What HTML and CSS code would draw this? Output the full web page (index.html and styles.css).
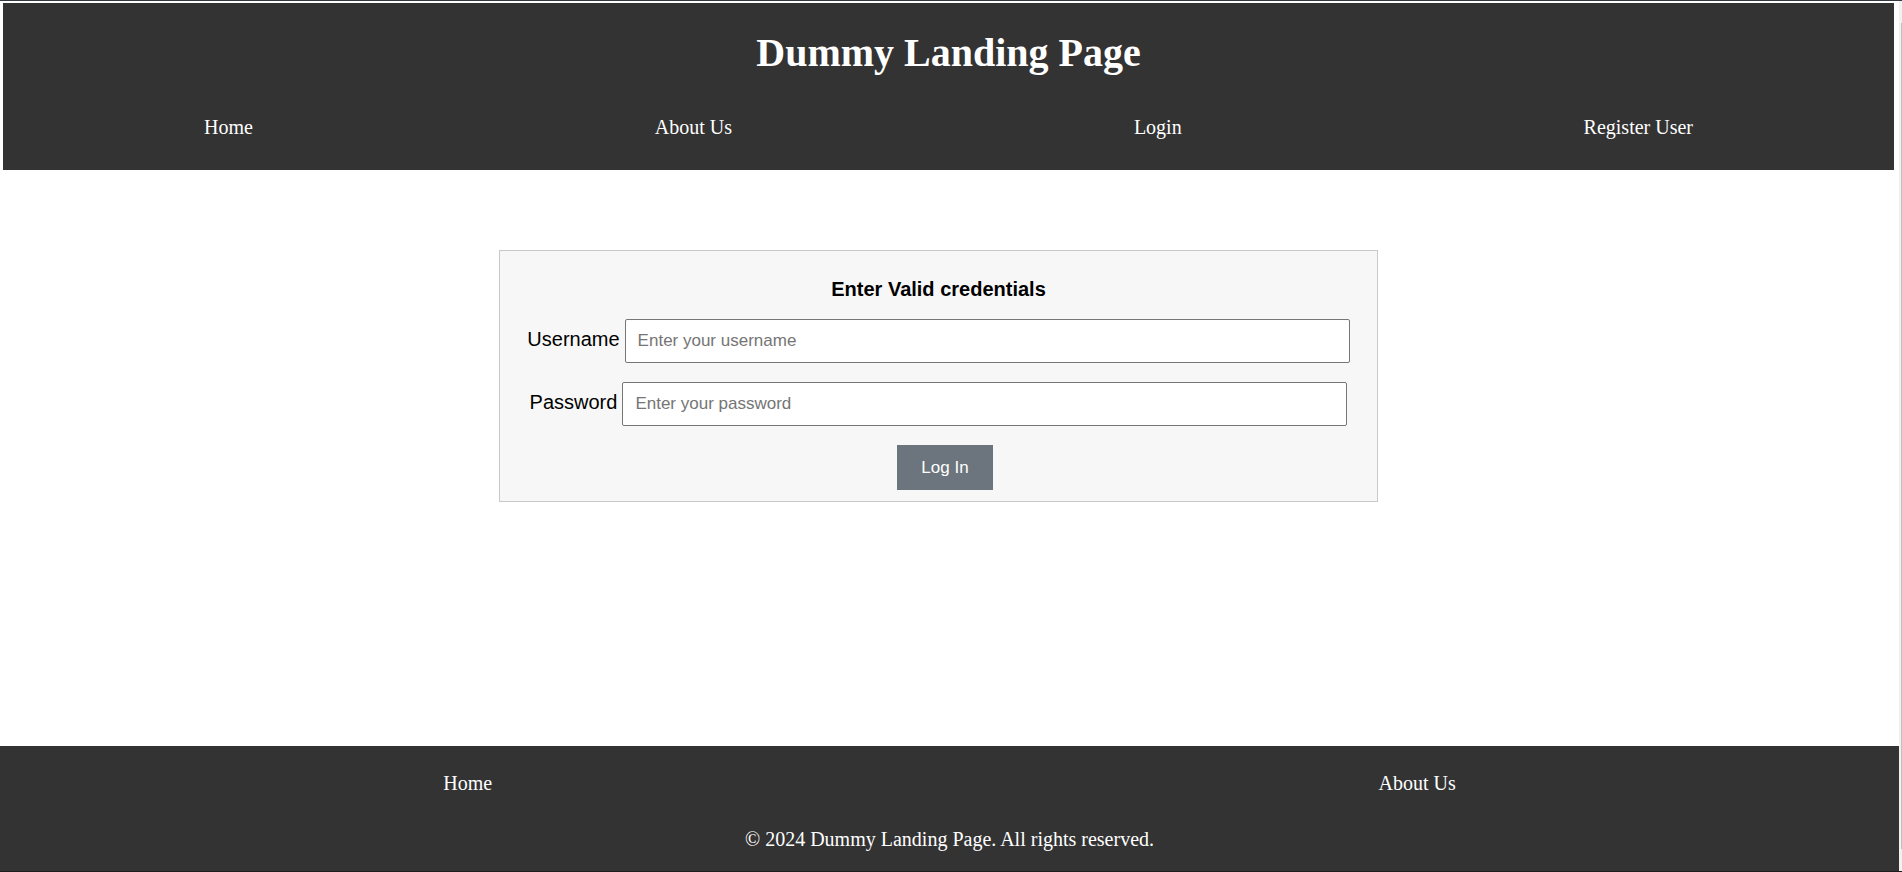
FILE: index.html
```
<!DOCTYPE html>
<html lang="en">
<head>
  <meta charset="utf-8">
  <title>Dummy Landing Page</title>
  <link rel="stylesheet" href="styles.css">
</head>
<body>
  <div class="window">
    <div class="page">
      <header class="header">
        <h1 class="title">Dummy Landing Page</h1>
        <nav class="nav">
          <a href="#">Home</a>
          <a href="#">About Us</a>
          <a href="#">Login</a>
          <a href="#">Register User</a>
        </nav>
      </header>
      <main class="main">
        <form class="card">
          <h2 class="card-title">Enter Valid credentials</h2>
          <div class="field">
            <label for="username">Username</label>
            <input id="username" type="text" placeholder="Enter your username">
          </div>
          <div class="field">
            <label for="password">Password</label>
            <input id="password" type="password" placeholder="Enter your password">
          </div>
          <button class="submit" type="button">Log In</button>
        </form>
      </main>
      <footer class="footer">
        <nav class="nav">
          <a href="#">Home</a>
          <a href="#">About Us</a>
        </nav>
        <p class="copyright">© 2024 Dummy Landing Page. All rights reserved.</p>
      </footer>
    </div>
    <div class="scroll-track"><div class="scroll-thumb"></div></div>
  </div>
</body>
</html>
```

FILE: styles.css
```
* {
  box-sizing: border-box;
}

body {
  margin: 0;
  background: #fff;
  color: #000;
  font-family: "Liberation Serif", "Times New Roman", serif;
  font-size: 20px;
  line-height: 23px;
}

.window {
  display: flex;
  min-height: 100vh;
  border-top: 1px solid #333842;
  border-bottom: 1px solid #201c21;
}

.page {
  display: flex;
  flex: 1;
  flex-direction: column;
}

.header {
  margin: 2px 5px 0 3px;
  padding: 27px 0 31px;
  background: #333;
  color: #fff;
}

.title {
  margin: 0 0 40px;
  font-size: 40px;
  line-height: 46px;
  text-align: center;
}

.nav {
  display: flex;
  justify-content: space-around;
}

.nav a {
  color: #fff;
  text-decoration: none;
}

.main {
  display: flex;
  flex: 1;
  align-items: flex-start;
  justify-content: center;
  margin: 0 5px 0 3px;
  padding: 80px 20px 80px 0;
  font-family: "Liberation Sans", Arial, sans-serif;
}

.card {
  display: flex;
  flex-direction: column;
  align-items: center;
  width: 47%;
  padding: 27px 22px 11px;
  border: 1px solid #c8c8c8;
  background: #f7f7f7;
}

.card-title {
  margin: 0 0 18px;
  font-size: 20px;
}

.field {
  display: flex;
  align-items: baseline;
  justify-content: center;
  gap: 5px;
  width: 100%;
  margin-bottom: 19px;
}

.field input {
  width: 87%;
  height: 44px;
  padding: 0 12px;
  border: 1px solid #767676;
  border-radius: 2px;
  background: #fff;
  font-family: inherit;
  font-size: 17px;
}

.field input::placeholder {
  color: #757575;
}

.submit {
  height: 45px;
  margin-left: 13px;
  padding: 0 24px;
  border: 0;
  background: #6c757d;
  color: #fff;
  font-family: inherit;
  font-size: 17px;
}

.footer {
  padding: 26px 0 20px;
  background: #333;
  color: #fff;
}

.copyright {
  margin: 33px 0 0;
  text-align: center;
}

.scroll-track {
  width: 3px;
  padding: 22px 0 22px 2px;
  background: #f1f1f1;
}

.scroll-thumb {
  height: 100%;
  background: #c1c1c1;
}
```
